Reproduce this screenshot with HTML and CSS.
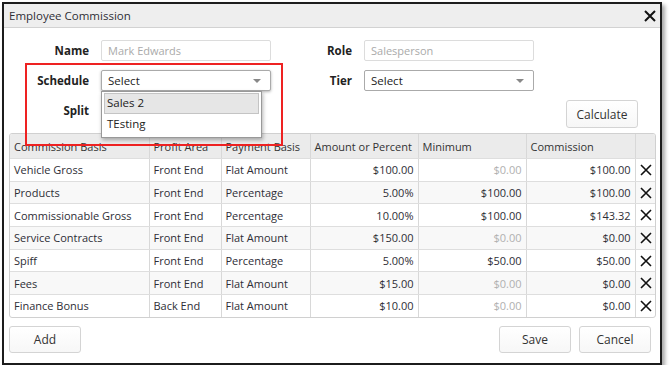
FILE: index.html
```html
<!DOCTYPE html>
<html lang="en">
<head>
    <meta charset="UTF-8">
    <title>Employee Commission</title>
    <link rel="stylesheet" href="styles.css">
</head>
<body>
    <div class="dialog">
        <div class="dialog-title">
            <span>Employee Commission</span>
            <button class="close-btn" type="button" aria-label="Close">
                <svg width="12" height="12" viewBox="0 0 12 12"><path d="M1 1 L11 11 M11 1 L1 11" stroke="#111" stroke-width="2" fill="none"/></svg>
            </button>
        </div>

        <div class="dialog-body">
            <!-- Employee fields -->
            <div class="form-grid">
                <label class="form-label">Name</label>
                <div class="text-input disabled">Mark Edwards</div>
                <label class="form-label">Role</label>
                <div class="text-input disabled">Salesperson</div>
                <div></div>

                <label class="form-label">Schedule</label>
                <div class="select-wrap">
                    <div class="select-box focused">Select<span class="caret"></span></div>
                    <ul class="select-list">
                        <li class="hover">Sales 2</li>
                        <li>TEsting</li>
                    </ul>
                </div>
                <label class="form-label">Tier</label>
                <div class="select-box">Select<span class="caret"></span></div>
                <div></div>

                <label class="form-label split-label">Split</label>
                <div></div>
                <div></div>
                <div></div>
                <button class="btn calc-btn" type="button">Calculate</button>
            </div>

            <!-- Commission table -->
            <div class="table-wrap">
                <table class="commission-table">
                    <colgroup>
                        <col style="width:139px"><col style="width:72px"><col style="width:89px">
                        <col style="width:108px"><col style="width:108px"><col style="width:109px"><col style="width:22px">
                    </colgroup>
                    <thead>
                        <tr>
                            <th>Commission Basis</th>
                            <th>Profit Area</th>
                            <th>Payment Basis</th>
                            <th>Amount or Percent</th>
                            <th>Minimum</th>
                            <th>Commission</th>
                            <th></th>
                        </tr>
                    </thead>
                    <tbody id="rows"></tbody>
                </table>
            </div>

            <div class="dialog-footer">
                <button class="btn" type="button">Add</button>
                <div class="footer-right">
                    <button class="btn" type="button">Save</button>
                    <button class="btn" type="button">Cancel</button>
                </div>
            </div>
        </div>

        <!-- annotation -->
        <div class="highlight-box"></div>
    </div>

    <script>
        const rows = [
            ["Vehicle Gross", "Front End", "Flat Amount", "$100.00", "$0.00", "$100.00"],
            ["Products", "Front End", "Percentage", "5.00%", "$100.00", "$100.00"],
            ["Commissionable Gross", "Front End", "Percentage", "10.00%", "$100.00", "$143.32"],
            ["Service Contracts", "Front End", "Flat Amount", "$150.00", "$0.00", "$0.00"],
            ["Spiff", "Front End", "Percentage", "5.00%", "$50.00", "$50.00"],
            ["Fees", "Front End", "Flat Amount", "$15.00", "$0.00", "$0.00"],
            ["Finance Bonus", "Back End", "Flat Amount", "$10.00", "$0.00", "$0.00"]
        ];
        const xIcon = '<svg width="12" height="12" viewBox="0 0 12 12"><path d="M1 1 L11 11 M11 1 L1 11" stroke="#111" stroke-width="1.6" fill="none"/></svg>';
        const tbody = document.getElementById("rows");
        rows.forEach(r => {
            const tr = document.createElement("tr");
            const muted = r[4] === "$0.00" ? ' class="num muted"' : ' class="num"';
            tr.innerHTML = `<td>${r[0]}</td><td>${r[1]}</td><td>${r[2]}</td>` +
                `<td class="num">${r[3]}</td><td${muted}>${r[4]}</td><td class="num">${r[5]}</td>` +
                `<td class="del">${xIcon}</td>`;
            tbody.appendChild(tr);
        });
    </script>
</body>
</html>
```

FILE: styles.css
```css
body {
    margin: 0;
    font-family: "Open Sans", Arial, sans-serif;
    font-size: 11px;
    color: #2e2e36;
    background: #fff;
}
.dialog {
    position: relative;
    box-sizing: border-box;
    width: 660px;
    height: 363px;
    margin: 2px 0 0 2px;
    border: 2px solid #1c1c1c;
    background: #fff;
    box-shadow: 3px 3px 4px rgba(0, 0, 0, 0.35);
}
.dialog-title {
    display: flex;
    align-items: center;
    justify-content: space-between;
    height: 23px;
    padding: 0 4px 0 5px;
    background: #eeeeee;
    border-bottom: 1px solid #d2d2d2;
    font-size: 11.5px;
}
.close-btn {
    border: none;
    background: none;
    padding: 0;
    margin-top: 1px;
    display: flex;
}
.dialog-body {
    padding: 0 4px 0 5px;
}
.form-grid {
    display: grid;
    grid-template-columns: 80px 170px 69px 170px 1fr;
    grid-template-rows: 21px 21px 28px;
    column-gap: 12px;
    row-gap: 9px;
    padding: 12px 0 0 0;
    align-items: center;
}
.form-label {
    font-weight: bold;
    text-align: right;
    color: #222;
    font-size: 11.5px;
}
.split-label {
    align-self: start;
    margin-top: 3px;
}
.text-input,
.select-box {
    box-sizing: border-box;
    height: 21px;
    line-height: 19px;
    padding: 0 6px;
    border: 1px solid #dcdcdc;
    border-radius: 2px;
    background: #fff;
}
.text-input.disabled {
    color: #aaa;
}
.select-box {
    position: relative;
    border-color: #aaa;
    color: #222;
    font-size: 11.5px;
}
.select-box.focused {
    box-shadow: 0 1px 3px rgba(0, 0, 0, 0.3);
}
.caret {
    position: absolute;
    right: 9px;
    top: 8px;
    border-left: 4px solid transparent;
    border-right: 4px solid transparent;
    border-top: 4px solid #888;
}
.select-wrap {
    position: relative;
}
.select-list {
    position: absolute;
    top: 21px;
    left: 0;
    z-index: 2;
    box-sizing: border-box;
    width: 161px;
    margin: 0;
    padding: 1px 2px 2px 2px;
    list-style: none;
    background: #fff;
    border: 1px solid #999;
    box-shadow: 1px 2px 4px rgba(0, 0, 0, 0.3);
    font-size: 11.5px;
}
.select-list li {
    height: 19px;
    line-height: 18px;
    padding: 0 2px;
    border: 1px solid transparent;
    color: #222;
}
.select-list li.hover {
    background: #e6e6e6;
    border-color: #c4c4c4;
}
.btn {
    box-sizing: border-box;
    width: 72px;
    height: 27px;
    font-family: inherit;
    font-size: 12px;
    color: #333;
    background: linear-gradient(#fff, #f7f7f7);
    border: 1px solid #d4d4d4;
    border-radius: 3px;
}
.calc-btn {
    height: 28px;
    justify-self: start;
    margin-left: 20px;
}
.table-wrap {
    margin-top: 5px;
    border: 1px solid #d0d0d0;
    border-radius: 3px;
    overflow: hidden;
    width: 645px;
}
.commission-table {
    width: 100%;
    border-collapse: collapse;
    table-layout: fixed;
}
.commission-table th,
.commission-table td {
    padding: 0 4px;
    border-right: 1px solid #d8d8d8;
    border-bottom: 1px solid #dedede;
    white-space: nowrap;
    overflow: hidden;
    text-align: left;
}
.commission-table th:last-child,
.commission-table td:last-child {
    border-right: none;
}
.commission-table tr:last-child td {
    border-bottom: none;
}
.commission-table th {
    height: 24px;
    font-weight: normal;
    background: #ebebeb;
    color: #333;
}
.commission-table td {
    height: 21.7px;
}
.commission-table tbody tr:nth-child(even) {
    background: #f8f8f8;
}
.commission-table td.num {
    text-align: right;
}
.commission-table td.muted {
    color: #b0b0b0;
}
.commission-table td.del {
    padding: 0 0 0 4px;
    line-height: 0;
}
.dialog-footer {
    display: flex;
    justify-content: space-between;
    margin-top: 8px;
    padding-right: 5px;
}
.footer-right {
    display: flex;
    gap: 8px;
}
.highlight-box {
    position: absolute;
    left: 21px;
    top: 59px;
    width: 254px;
    height: 79px;
    border: 2px solid #ee2222;
    pointer-events: none;
}
```
